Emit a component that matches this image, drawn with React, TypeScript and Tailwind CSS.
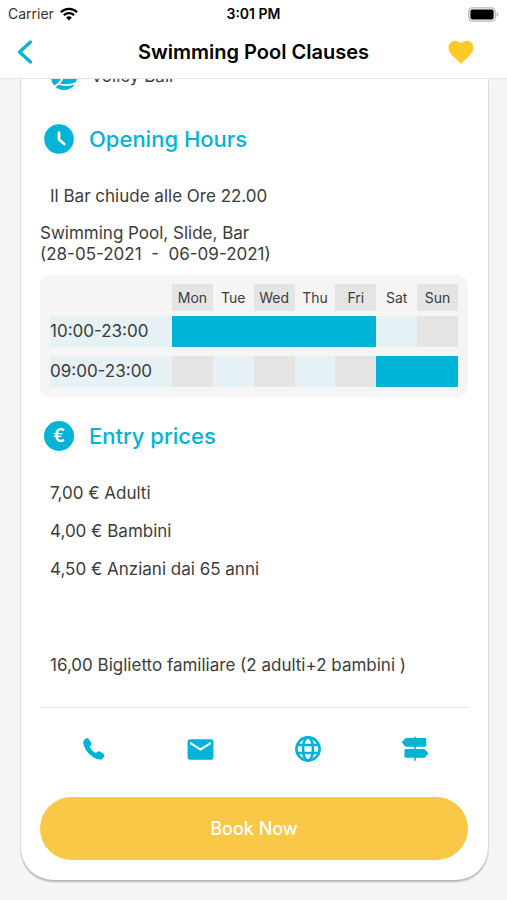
import type { ReactNode } from "react";
import { MdEmail, MdFavorite } from "react-icons/md";

const days = ["Mon", "Tue", "Wed", "Thu", "Fri", "Sat", "Sun"];

const slots = [
  { hours: "10:00-23:00", open: [true, true, true, true, true, false, false] },
  { hours: "09:00-23:00", open: [false, false, false, false, false, true, true] },
];

const prices = ["7,00 € Adulti", "4,00 € Bambini", "4,50 € Anziani dai 65 anni"];

function WifiIcon() {
  return (
    <svg viewBox="0 0 18 14" className="h-3.5 w-[18px]" aria-hidden="true">
      <path d="M0.9 5.1a11.6 11.6 0 0 1 16.2 0" fill="none" stroke="#000" strokeWidth="2.3" />
      <path d="M3.8 8.2a7.5 7.5 0 0 1 10.4 0" fill="none" stroke="#000" strokeWidth="2.1" />
      <path d="M9 13.6 6.1 10.6a4.2 4.2 0 0 1 5.8 0z" fill="#000" />
    </svg>
  );
}

function BatteryIcon() {
  return (
    <svg viewBox="0 0 31 15" className="h-[15px] w-[31px]" aria-hidden="true">
      <rect x="0.8" y="0.8" width="26.4" height="13.4" rx="3.8" fill="#fff" stroke="#b5b5b5" strokeWidth="1.3" />
      <rect x="2.4" y="2.4" width="23.2" height="10.2" rx="1.8" fill="#000" />
      <path d="M28.6 5.2v4.6c1-.4 1.7-1.2 1.7-2.3s-.7-1.9-1.7-2.3z" fill="#b5b5b5" />
    </svg>
  );
}

function BallIcon() {
  return (
    <svg viewBox="0 0 26 26" className="size-[26px] shrink-0" aria-hidden="true">
      <circle cx="13" cy="13" r="13" fill="#00b4d8" />
      <path d="M3 22.500c4-1.500 6.500-4 8-8.500M7 19.500c5 2 12 2 18-.5" fill="none" stroke="#fff" strokeWidth="1.8" />
      <path d="M9 18.500c1.500-1.500 2.300-3 3-5" fill="none" stroke="#fff" strokeWidth="1.4" />
    </svg>
  );
}

function ClockIcon() {
  return (
    <svg viewBox="0 0 30 30" className="size-[30px]" aria-hidden="true">
      <circle cx="15" cy="15" r="14.8" fill="#00b4d8" />
      <path d="M15 8.500v7l5.200 4.600" fill="none" stroke="#fff" strokeWidth="2.7" strokeLinecap="round" strokeLinejoin="round" />
    </svg>
  );
}

function PhoneIcon() {
  return (
    <svg viewBox="0 0 22 22" className="size-[22px]" fill="currentColor" aria-hidden="true">
      <path d="M1.700 1.500 3.200.4c.8-.5 1.800-.4 2.400.4l2.700 4c.5.8.4 1.600-.2 2.300l-1 1.200c-.4.500-.4 1 0 1.500 1.300 1.900 2.900 3.500 4.800 4.800.5.400 1 .4 1.500 0l1.200-.9c.7-.6 1.500-.7 2.300-.2l3.700 2.500c.9.600 1.100 1.600.6 2.400l-1.200 1.900c-.8 1.100-2.200 1.600-3.700 1.300C8.700 20.200 1.800 13.300.3 5.600 0 4 .5 2.400 1.700 1.500z" />
    </svg>
  );
}

function GlobeIcon() {
  return (
    <svg viewBox="0 0 26 26" className="size-[26px]" fill="none" stroke="currentColor" strokeWidth="2.6" aria-hidden="true">
      <circle cx="13" cy="13" r="11.6" />
      <ellipse cx="13" cy="13" rx="5" ry="11.6" />
      <path d="M2 9h22M2 17h22" />
    </svg>
  );
}

function SignpostIcon() {
  return (
    <svg viewBox="0 0 26 26" className="size-[26px]" fill="currentColor" aria-hidden="true">
      <path d="M12.200.8h1.600v24h-1.600z" />
      <path d="M3.600 2h19.300a1.400 1.400 0 0 1 1.400 1.400v6a1.400 1.400 0 0 1-1.400 1.400H3.600L.4 7.300a1.300 1.300 0 0 1 0-1.800z" />
      <path d="M3.800 13h18.800l3.100 3.500a1.300 1.300 0 0 1 0 1.800l-3.100 3.500H3.800a1.400 1.400 0 0 1-1.400-1.400v-6a1.400 1.400 0 0 1 1.400-1.400z" />
    </svg>
  );
}

function SectionTitle({ icon, children }: { icon: ReactNode; children: ReactNode }) {
  return (
    <div className="flex h-[30px] items-center gap-[15px] pl-1">
      {icon}
      <h2 className="text-[22px] font-medium leading-[30px] text-[#00b4d8]">{children}</h2>
    </div>
  );
}

function cellColor(open: boolean, index: number) {
  if (open) return "bg-[#00b4d8]";
  return index % 2 === 0 ? "bg-[#e4e4e4]" : "bg-[#e6f1f5]";
}

function Timetable() {
  return (
    <div className="mt-2.5 rounded-[10px] bg-[#f5f5f5] px-2.5 pb-2.5 pt-[9px]">
      <table className="w-full table-fixed border-collapse">
        <thead>
          <tr>
            <td className="w-[122px] p-0" />
            {days.map((day, i) => (
              <th key={day} scope="col" className="p-0 text-sm font-normal">
                <div className={`h-[27px] leading-[27px] ${i % 2 === 0 ? "bg-[#e4e4e4]" : ""}`}>{day}</div>
              </th>
            ))}
          </tr>
        </thead>
        <tbody>
          {slots.map(({ hours, open }, row) => (
            <tr key={hours}>
              <th scope="row" className={`p-0 text-left font-normal ${row === 0 ? "pt-[5px]" : "pt-[9px]"}`}>
                <div className="h-[31px] bg-[#e6f1f5] leading-[31px]">{hours}</div>
              </th>
              {open.map((isOpen, i) => (
                <td key={days[i]} className={`p-0 ${row === 0 ? "pt-[5px]" : "pt-[9px]"}`}>
                  <div className={`h-[31px] ${cellColor(isOpen, i)}`} />
                </td>
              ))}
            </tr>
          ))}
        </tbody>
      </table>
    </div>
  );
}

export default function App() {
  return (
    <div className="min-h-screen bg-[#f5f5f5] font-['Inter',sans-serif] text-[17px] leading-6 text-[#3c3c3c]">
      <header className="border-b border-[#e4e4e4] bg-white text-black">
        <div className="grid h-7 grid-cols-3 items-center px-2 text-sm">
          <div className="flex items-center gap-1.5 text-[#333]">
            Carrier
            <WifiIcon />
          </div>
          <div className="text-center font-semibold">3:01 PM</div>
          <div className="flex justify-end">
            <BatteryIcon />
          </div>
        </div>
        <div className="grid h-[50px] grid-cols-[48px_1fr_48px] items-center px-4 pb-0.5">
          <button type="button" aria-label="Back">
            <svg viewBox="0 0 18 26" className="h-[26px] w-[18px]" aria-hidden="true">
              <path d="M14.500 3 3.500 13l11 10" fill="none" stroke="#00b4d8" strokeWidth="3.2" strokeLinecap="round" strokeLinejoin="round" />
            </svg>
          </button>
          <h1 className="text-center text-xl font-semibold">Swimming Pool Clauses</h1>
          <button type="button" aria-label="Favorite" className="pl-[3px] text-[#ffca28]">
            <MdFavorite size={30} />
          </button>
        </div>
      </header>

      <main className="pb-[19px]">
        <article className="ml-[21px] mr-[19px] rounded-b-[32px] bg-white pb-5 pl-[19px] pr-5 shadow-[0_2px_2px_rgba(0,0,0,0.25),0_0_2px_rgba(0,0,0,0.15)] [clip-path:inset(0_-8px_-8px_-8px)]">
          <div className="flex h-[11px] items-end gap-3.5 overflow-hidden pl-[11px]">
            <BallIcon />
            <span className="leading-7">Volley Ball</span>
          </div>

          <section className="pt-[34px]">
            <SectionTitle icon={<ClockIcon />}>Opening Hours</SectionTitle>
            <p className="mt-[30px] pl-2.5">Il Bar chiude alle Ore 22.00</p>
            <p className="mt-[15px] leading-[21px]">
              Swimming Pool, Slide, Bar
              <br />
              (28-05-2021&nbsp; -&nbsp; 06-09-2021)
            </p>
            <Timetable />
          </section>

          <section className="pt-6">
            <SectionTitle
              icon={
                <span className="grid size-[30px] place-items-center rounded-full bg-[#00b4d8] text-lg font-semibold text-white">€</span>
              }
            >
              Entry prices
            </SectionTitle>
            <ul className="mt-[30px] space-y-3.5 pl-2.5">
              {prices.map((price) => (
                <li key={price}>{price}</li>
              ))}
            </ul>
            <p className="mt-[72px] pl-2.5">16,00 Biglietto familiare (2 adulti+2 bambini )</p>
          </section>

          <nav className="mt-[30px] grid grid-cols-4 place-items-center border-t border-[#e2e2e2] pb-[33px] pt-[26px] text-[#00b4d8]">
            <a href="#call" aria-label="Call">
              <PhoneIcon />
            </a>
            <a href="#email" aria-label="Email" className="grid h-[30px] place-items-center">
              <MdEmail size={31} />
            </a>
            <a href="#website" aria-label="Website">
              <GlobeIcon />
            </a>
            <a href="#directions" aria-label="Directions">
              <SignpostIcon />
            </a>
          </nav>

          <button type="button" className="block h-[63px] w-full rounded-full bg-[#f9c846] text-lg font-medium text-white">
            Book Now
          </button>
        </article>
      </main>
    </div>
  );
}
